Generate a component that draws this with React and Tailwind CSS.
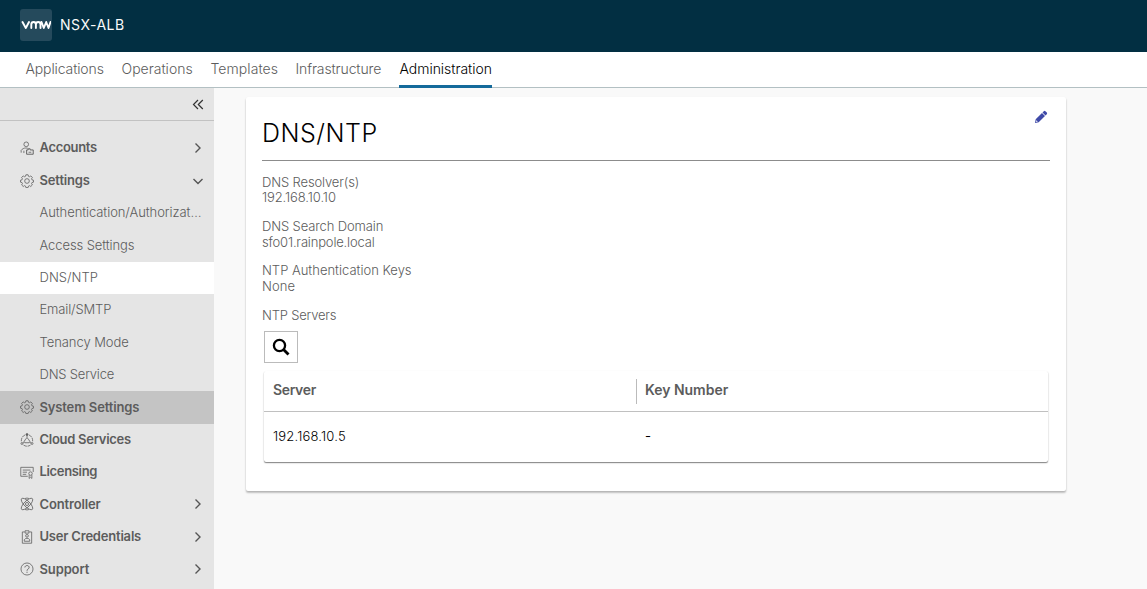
import React from 'react';

const NAV = [
  { label: 'Applications', cls: 'w-[78px] tracking-[-0.12px]' },
  { label: 'Operations', cls: 'w-[71px] tracking-[0.01px]' },
  { label: 'Templates', cls: 'w-[67px] tracking-[0.06px]' },
  { label: 'Infrastructure', cls: 'w-[86px] tracking-[-0.11px]' },
];

function IconBase({ children }) {
  return (
    <svg viewBox="0 0 36 36" className="h-[14px] w-[14px] shrink-0" fill="none" stroke="#5c5c5c" strokeWidth="2" strokeLinejoin="round">
      {children}
    </svg>
  );
}

function GearIcon() {
  return (
    <IconBase>
      <path d="M15.2 2h5.6l1 3.9 2.6 1.1 3.4-2.1 4 4-2.1 3.4 1.1 2.7 3.9 1v5l-3.9 1-1.1 2.7 2.1 3.4-4 4-3.4-2.1-2.6 1.1-1 3.9h-5.6l-1-3.9-2.6-1.1-3.4 2.1-4-4 2.1-3.4-1.1-2.7-3.9-1v-5l3.9-1 1.1-2.7-2.1-3.4 4-4 3.4 2.1 2.6-1.1z" />
      <circle cx="18" cy="18" r="6" />
    </IconBase>
  );
}

function AccountIcon() {
  return (
    <IconBase>
      <circle cx="16" cy="8.500" r="6" />
      <path d="M3 30v-6c3-4 7-6 12-6 2 0 4 .3 5 .8" />
      <path d="M17 23h4v-3h5v3h8v11H17z" strokeWidth="2.400" />
      <path d="M22 29h7M10 25v6" />
    </IconBase>
  );
}

function CloudServicesIcon() {
  return (
    <IconBase>
      <circle cx="18" cy="4" r="2.500" fill="#5c5c5c" />
      <circle cx="5" cy="27" r="2.500" />
      <circle cx="31" cy="27" r="2.500" />
      <path d="M13 5C6 8 3 14 3.500 22M23 5c7 3 10 9 9.500 17M9 31c6 4 12 4 18 0" strokeDasharray="9 2" />
      <path d="M18 6v6M7 26l4-2M29 26l-4-2" />
      <path d="M12.500 25c-3.500-2-2-6 1-6.500C14 11.500 22 11.500 22.500 18.500c3 .5 4.500 4.500 1 6.500z" />
    </IconBase>
  );
}

function LicenseIcon() {
  return (
    <IconBase>
      <path d="M20 29H2V6h32v12M7 13h20M7 18.500h11M7 24h9" />
      <circle cx="27" cy="22" r="4.500" />
      <path d="M23.500 26v8.500l3.500-3 3.500 3V26" />
    </IconBase>
  );
}

function ControllerIcon() {
  return (
    <IconBase>
      <ellipse cx="18" cy="18" rx="19.500" ry="7.500" transform="rotate(45 18 18)" />
      <ellipse cx="18" cy="18" rx="19.500" ry="7.500" transform="rotate(-45 18 18)" />
      <circle cx="18" cy="18" r="4" />
      <path d="M13 4c3-1.500 7-1.500 10 0M13 32c3 1.500 7 1.500 10 0" />
    </IconBase>
  );
}

function BadgeIcon() {
  return (
    <IconBase>
      <path d="M12 5H6v29h24V5h-6M13 2h10v6H13z" />
      <circle cx="18" cy="15" r="3.500" />
      <path d="M11 29v-4c3-5 11-5 14 0v4z" />
    </IconBase>
  );
}

function HelpIcon() {
  return (
    <IconBase>
      <circle cx="18" cy="18" r="15.500" />
      <path d="M12.500 14c.5-6.500 11-6.500 11 0 0 4-5.500 4-5.500 8.500M18 25v3" strokeWidth="2.300" />
    </IconBase>
  );
}

function Chevron({ open }) {
  return (
    <svg viewBox="0 0 12 12" className={open ? 'mr-[10px] ml-auto h-3 w-3 rotate-90' : 'mr-[10px] ml-auto h-3 w-3'} fill="none" stroke="#555" strokeWidth="1.400">
      <path d={open ? 'M4 1.500 8.500 6 4 10.500' : 'M3.500 1.500 8 6l-4.500 4.500'} />
    </svg>
  );
}

const TOP_GROUPS = [
  { label: 'Accounts', cls: 'tracking-[-0.32px]', Icon: AccountIcon, chevron: true },
  { label: 'Settings', cls: 'tracking-[-0.15px]', Icon: GearIcon, chevron: true, open: true },
];

const SETTINGS_LINKS = [
  { label: 'Authentication/Authorizat…', cls: 'tracking-[-0.07px]' },
  { label: 'Access Settings', cls: 'tracking-[-0.09px]' },
  { label: 'DNS/NTP', cls: 'tracking-[0.03px]', active: true },
  { label: 'Email/SMTP', cls: 'tracking-[-0.15px]' },
  { label: 'Tenancy Mode', cls: 'tracking-[-0.06px]' },
  { label: 'DNS Service', cls: 'tracking-[-0.2px]' },
];

const BOTTOM_GROUPS = [
  { label: 'System Settings', cls: 'tracking-[-0.15px]', Icon: GearIcon, active: true },
  { label: 'Cloud Services', cls: 'tracking-[-0.27px]', Icon: CloudServicesIcon },
  { label: 'Licensing', cls: 'tracking-[-0.34px]', Icon: LicenseIcon },
  { label: 'Controller', cls: 'tracking-[-0.14px]', Icon: ControllerIcon, chevron: true },
  { label: 'User Credentials', cls: 'tracking-[-0.2px]', Icon: BadgeIcon, chevron: true },
  { label: 'Support', cls: 'tracking-[-0.13px]', Icon: HelpIcon, chevron: true },
];

function Group({ label, cls, Icon, chevron, open, active }) {
  return (
    <div className={`flex h-[32.400px] items-center pl-5 font-semibold ${active ? 'bg-[#c4c4c4]' : ''}`}>
      <Icon />
      <span className={`ml-[5.500px] whitespace-nowrap ${cls}`}>{label}</span>
      {chevron && <Chevron open={open} />}
    </div>
  );
}

const FIELDS = [
  { label: 'DNS Resolver(s)', lc: 'tracking-[-0.13px]', value: '192.168.10.10', vc: 'tracking-[-0.1px]' },
  { label: 'DNS Search Domain', lc: 'tracking-[-0.13px]', value: 'sfo01.rainpole.local', vc: 'tracking-[-0.17px]' },
  { label: 'NTP Authentication Keys', lc: 'tracking-[0px]', value: 'None', vc: 'tracking-[0.1px]' },
];

export default function App() {
  return (
    <div className="flex h-[589px] w-full flex-col overflow-hidden bg-[#f9f9f9] font-['Inter',sans-serif] text-[13px] text-[#5c5c5c]">
      <header className="flex h-[52px] shrink-0 items-start bg-[#022f42] pt-[9px] pl-5">
        <div className="flex h-8 w-8 items-center justify-center rounded-[3px] bg-[#254a5c]">
          <svg viewBox="0 0 30 12" className="h-3 w-[30px]" fill="none" stroke="#fff" strokeWidth="1.900" strokeLinecap="round" strokeLinejoin="round">
            <path d="M1.500 3 4.800 9 8 3M10.300 9V5.500q0-2.500 2.300-2.500t2.300 2.500V9M14.900 5.500q0-2.500 2.300-2.500t2.300 2.500V9M20.500 3l2.300 6 2.400-6 2.300 6 2-6" />
          </svg>
        </div>
        <span className="ml-2 text-sm leading-8 tracking-[0.500px] text-[#fafafa]">NSX-ALB</span>
      </header>

      <nav className="flex h-9 shrink-0 gap-[18px] border-b border-[#b3c0c3] bg-white pl-[25.500px] text-sm leading-[34px] font-light">
        {NAV.map((n) => (
          <a key={n.label} className={`whitespace-nowrap ${n.cls}`}>{n.label}</a>
        ))}
        <a className="-ml-px h-9 w-[93px] border-b-[3px] border-[#146a9b] pl-px whitespace-nowrap tracking-[-0.03px] text-black">Administration</a>
      </nav>

      <div className="flex min-h-0 flex-1">
        <aside className="w-[214px] shrink-0 bg-[#e5e5e5]">
          <div className="flex h-[33px] items-center justify-end border-b border-[#c2c2c2] pr-[10px]">
            <svg viewBox="0 0 12 12" className="h-3 w-3" fill="none" stroke="#333" strokeWidth="1.200">
              <path d="M6 2 1.500 6.500 6 11M10.800 2 6.300 6.500l4.500 4.500" />
            </svg>
          </div>
          <div className="pt-[11px]">
            {TOP_GROUPS.map((g) => <Group key={g.label} {...g} />)}
            {SETTINGS_LINKS.map((s) => (
              <div key={s.label} className={`flex h-[32.400px] items-center pl-[39.500px] font-light whitespace-nowrap ${s.cls} ${s.active ? 'bg-white' : ''}`}>
                {s.label}
              </div>
            ))}
            {BOTTOM_GROUPS.map((g) => <Group key={g.label} {...g} />)}
          </div>
        </aside>

        <main className="flex-1 pt-[9px] pl-8">
          <section className="flex h-[394px] w-[820px] flex-col rounded-[2px] bg-white px-4 shadow-[0_2px_2px_rgba(0,0,0,0.2),0_1px_2px_rgba(0,0,0,0.12)]">
            <div className="flex h-[64px] w-[788px] shrink-0 items-start justify-between border-b border-[#8c8c8c]">
              <h1 className="pt-[18px] text-[25px] leading-9 font-light tracking-[0.530px] text-black">DNS/NTP</h1>
              <svg viewBox="0 0 14 14" className="mt-[13px] mr-[2px] h-[14px] w-[14px]" fill="#3f4aa8">
                <path d="M9.800 1.200q.8-.7 1.600 0l1.400 1.400q.7.8 0 1.600L11.500 5.500 8.500 2.500zM8 3l3 3L4.700 12.300 1 13l.7-3.700z" />
                <path d="M2.400 10.200 3.800 11.600 2 12.100z" fill="#fff" />
              </svg>
            </div>
            <dl className="flex h-[149px] shrink-0 flex-col gap-[13.200px] pt-[13.600px] leading-[15.600px] font-light">
              {FIELDS.map((f) => (
                <div key={f.label}>
                  <dt className={f.lc}>{f.label}</dt>
                  <dd className={f.vc}>{f.value}</dd>
                </div>
              ))}
              <dt className="tracking-[-0.2px]">NTP Servers</dt>
            </dl>
            <button className="mt-[21px] ml-[2px] flex h-8 w-[34px] shrink-0 items-center justify-center border border-[#bbb] bg-white">
              <svg viewBox="0 0 18 18" className="h-[18px] w-[18px]" fill="none" stroke="#000">
                <circle cx="7.500" cy="7.500" r="5.600" strokeWidth="2.300" />
                <path d="m11.500 11.500 5 5" strokeWidth="2.800" />
              </svg>
            </button>
            <div className="mt-2 ml-[2px] h-[91px] w-[784px] shrink-0 rounded-[2px] shadow-[0_1px_1px_rgba(0,0,0,0.4),0_1px_2px_rgba(0,0,0,0.15)]">
              <div className="flex h-[41px] border-b border-[#c0c0c0] text-sm leading-[38px] font-semibold">
                <div className="w-[372px] pl-[9px] tracking-[-0.350px]">Server</div>
                <div className="mt-2 h-[25px] border-l border-[#bbb] pl-2 leading-[22px] tracking-[-0.030px]">Key Number</div>
              </div>
              <div className="flex h-[50px] leading-[49px] text-black">
                <div className="w-[372px] pl-[9px] font-light tracking-[0.180px]">192.168.10.5</div>
                <div className="pl-[9px]">-</div>
              </div>
            </div>
          </section>
        </main>
      </div>
    </div>
  );
}
